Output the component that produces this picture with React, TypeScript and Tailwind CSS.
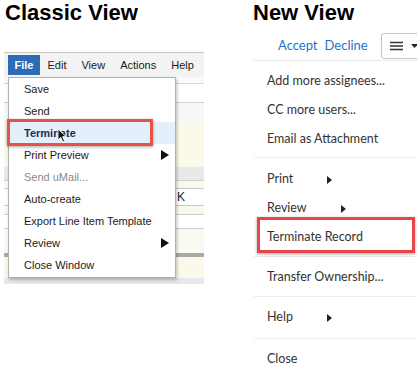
import React from 'react';

const classicItems = [
  { label: 'Save' },
  { label: 'Send' },
  { label: 'Terminate', active: true },
  { label: 'Print Preview', sub: true },
  { label: 'Send uMail...', disabled: true },
  { label: 'Auto-create' },
  { label: 'Export Line Item Template' },
  { label: 'Review', sub: true },
  { label: 'Close Window' },
];

// background stripes of the old screen, top to bottom
const stripes: { h: string; bg: string; k?: boolean }[] = [
  { h: 'h-[6px]', bg: 'bg-[#fafafa]' },
  { h: 'h-px', bg: 'bg-[#d8d8d8]' },
  { h: 'h-[18px]', bg: 'bg-white' },
  { h: 'h-px', bg: 'bg-[#d0d0d0]' },
  { h: 'h-[18px]', bg: 'bg-[#f7f7f7]' },
  { h: 'h-[46px]', bg: 'bg-[#fbfaea]' },
  { h: 'h-[13px]', bg: 'bg-[#e9e9e9]' },
  { h: 'h-px', bg: 'bg-[#cfcfcf]' },
  { h: 'h-[7px]', bg: 'bg-[#fbfaea]' },
  { h: 'h-px', bg: 'bg-[#c8c8c8]' },
  { h: 'h-[16px]', bg: 'bg-white', k: true },
  { h: 'h-px', bg: 'bg-[#c8c8c8]' },
  { h: 'h-[8px]', bg: 'bg-[#fbfaea]' },
  { h: 'h-px', bg: 'bg-[#cccccc]' },
  { h: 'h-[13px]', bg: 'bg-white' },
  { h: 'h-px', bg: 'bg-[#cccccc]' },
  { h: 'h-[24px]', bg: 'bg-[#fbfaf0]' },
  { h: 'h-[4px]', bg: 'bg-[#a8a8a8]' },
  { h: 'h-[21px]', bg: 'bg-[#fbfaea]' },
  { h: 'h-[6px]', bg: 'bg-[#e6e8ec]' },
];

const BigArrow = () => (
  <svg width="8" height="10" viewBox="0 0 8 10" className="ml-auto mr-[6px]">
    <path d="M0 0 L8 5 L0 10 Z" fill="#111" />
  </svg>
);

const SmallArrow = () => (
  <svg width="5" height="8" viewBox="0 0 5 8" className="ml-[34px]">
    <path d="M0 0 L5 4 L0 8 Z" fill="#222" />
  </svg>
);

const Cursor = () => (
  <svg width="10" height="15" viewBox="0 0 10 15" className="absolute left-[48px] top-[50px] z-10">
    <path d="M1 1 L1 12 L3.8 9.4 L5.8 14 L7.6 13.2 L5.6 8.6 L9 8.6 Z" fill="#111" stroke="#fff" strokeWidth="0.9" />
  </svg>
);

const ClassicView = () => (
  <div className="ml-[4px] mt-[27px] w-[200px] h-[232px] relative overflow-visible">
    {/* menu bar */}
    <div className="h-[25px] border-t border-[#c6c6c6] bg-[#f3f3f3] flex items-center pl-[4px] text-[11px] text-[#1a1a1a]">
      <div className="w-[32px] h-[20px] bg-[#2d6cb5] text-white font-bold flex items-center justify-center">File</div>
      <span className="px-[7.5px]">Edit</span>
      <span className="px-[7.5px]">View</span>
      <span className="px-[7.5px]">Actions</span>
      <span className="px-[7.5px]">Help</span>
    </div>
    {stripes.map((s, i) => (
      <div key={i} className={`${s.h} ${s.bg} flex items-center`}>
        {s.k && <span className="pl-[173px] text-[12px] text-[#222]">K</span>}
      </div>
    ))}

    {/* dropdown */}
    <div className="absolute left-[4px] top-[25px] w-[168px] h-[201px] bg-white border border-[#b0b0b0] shadow-[1px_2px_3px_rgba(0,0,0,0.25)]">
      {classicItems.map(item => (
        <div
          key={item.label}
          className={`h-[22px] flex items-center pl-[15px] text-[11px] ${
            item.active ? 'bg-[#e3effa] font-bold text-[#1d2d57]' : item.disabled ? 'text-[#8a8a8a]' : 'text-[#1a1a1a]'
          }`}
        >
          {item.label}
          {item.sub && <BigArrow />}
        </div>
      ))}
      <div className="absolute left-[-2px] top-[41px] w-[146px] h-[27px] border-[3px] border-[#e8514a] shadow-[0_1px_3px_rgba(0,0,0,0.35)]" />
      <Cursor />
    </div>
  </div>
);

const Row = ({ children }: { children: React.ReactNode }) => (
  <div className="h-[29px] flex items-center pl-[13px] text-[12.5px] text-[#333]">{children}</div>
);

const NewView = () => (
  <div className="flex-1 min-w-0" style={{ fontFamily: 'Lato, "Noto Sans", sans-serif' }}>
    <h1 className="text-[22px] leading-[25px] font-bold text-black" style={{ fontFamily: '"Liberation Sans", Arial, sans-serif' }}>
      New View
    </h1>
    <div className="mt-[8px] h-[26px] flex items-center pl-[25px] text-[13px] text-[#1f74c7]">
      <span>Accept</span>
      <span className="ml-[7px]">Decline</span>
      <div className="ml-[13px] w-[52px] h-[26px] shrink-0 border border-[#c4c4c4] rounded-[3px] bg-white flex items-center pl-[8px] gap-[8px]">
        <svg width="13" height="10" viewBox="0 0 13 10">
          <path d="M0 1.5 H13 M0 5 H13 M0 8.5 H13" stroke="#333" strokeWidth="1.4" />
        </svg>
        <svg width="7" height="4" viewBox="0 0 7 4">
          <path d="M0 0 H7 L3.5 4 Z" fill="#222" />
        </svg>
      </div>
    </div>

    <div className="ml-[1px] mt-px border-t border-[#e8e8e8] pt-[6px]">
      <Row>Add more assignees...</Row>
      <Row>CC more users...</Row>
      <Row>Email as Attachment</Row>
      <div className="h-px bg-[#ececec] mt-[3px] mb-[7px]" />
      <Row>Print<SmallArrow /></Row>
      <Row>Review<SmallArrow /></Row>
      <div className="relative">
        <Row>Terminate Record</Row>
        <div className="absolute left-[3px] top-[-6px] w-[158px] h-[36px] border-[3px] border-[#e8454a] shadow-[0_1px_3px_rgba(0,0,0,0.35)]" />
      </div>
      <div className="h-px bg-[#ececec] mt-[4px] mb-[6px]" />
      <Row>Transfer Ownership...</Row>
      <div className="h-px bg-[#ececec] mt-[4px] mb-[6px]" />
      <Row>Help<SmallArrow /></Row>
      <div className="h-px bg-[#ececec] mt-[6px] mb-[6px]" />
      <Row>Close</Row>
    </div>
  </div>
);

export default function App() {
  return (
    <div className="w-[417px] h-[376px] overflow-hidden bg-white flex" style={{ fontFamily: '"Liberation Sans", Arial, sans-serif' }}>
      <div className="w-[253px] shrink-0">
        <h1 className="pl-[5px] text-[22px] leading-[25px] font-bold text-black">Classic View</h1>
        <ClassicView />
      </div>
      <NewView />
    </div>
  );
}
